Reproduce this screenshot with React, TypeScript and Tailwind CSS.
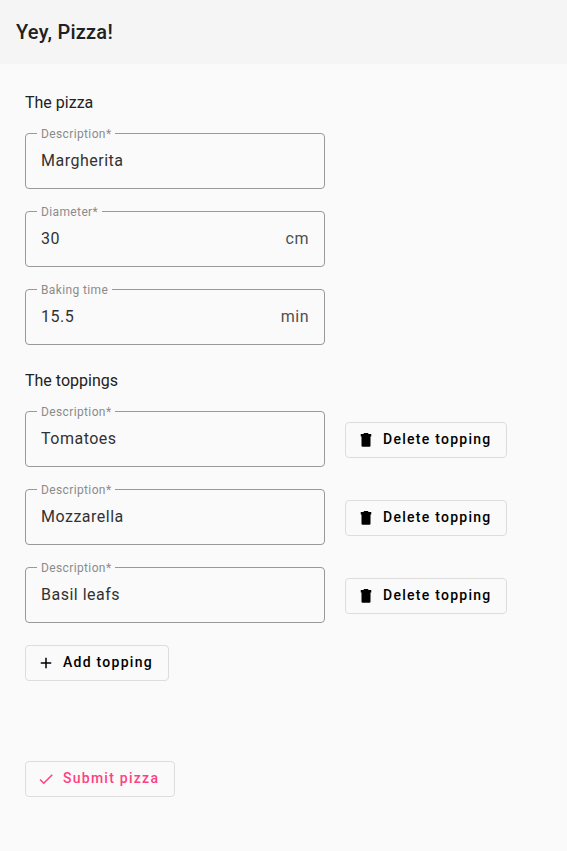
import { useState } from 'react';

const icons = {
  trash: 'M6 7h12v12.500q0 1.500-1.500 1.500h-9q-1.500 0-1.500-1.500zM5 4h3.500l1-1.300h5l1 1.300h3.500v3.200h-14z',
  plus: 'M19 13h-6v6h-2v-6H5v-2h6V5h2v6h6v2z',
  check: 'M9 16.17L4.83 12l-1.42 1.41L9 19 21 7l-1.41-1.41z',
};

type FieldProps = {
  id: string;
  label: string;
  value: string;
  suffix?: string;
  required?: boolean;
  onChange: (value: string) => void;
};

function Field({ id, label, value, suffix, required, onChange }: FieldProps) {
  return (
    <fieldset className="w-full max-w-[300px] min-w-0 rounded border border-[#999999] pb-2">
      <legend className="ml-[11px] px-1 text-xs leading-[13px] tracking-[0.03125em] text-[#8b8b8b]">
        <label htmlFor={id} className="block pt-0.5">
          {label}
          {required && '*'}
        </label>
      </legend>
      <div className="flex items-center px-[15px] tracking-[0.03125em]">
        <input
          id={id}
          value={value}
          required={required}
          onChange={(event) => onChange(event.target.value)}
          className="h-[39px] min-w-0 flex-1 bg-transparent tracking-[0.03125em] text-[#323232] outline-none"
        />
        {suffix && <span className="text-[#4f4f4f]">{suffix}</span>}
      </div>
    </fieldset>
  );
}

type ActionProps = {
  icon: keyof typeof icons;
  label: string;
  accent?: boolean;
  submit?: boolean;
  onClick?: () => void;
};

function Action({ icon, label, accent, submit, onClick }: ActionProps) {
  return (
    <button
      type={submit ? 'submit' : 'button'}
      onClick={onClick}
      className={`flex h-9 shrink-0 items-center gap-2 rounded border border-[#dddddd] pr-[15px] pl-[11px] text-sm font-medium tracking-[0.09em] ${
        accent ? 'text-[#ff4081]' : 'text-black'
      }`}
    >
      <svg viewBox="0 0 24 24" className="size-[18px] fill-current" aria-hidden="true">
        <path d={icons[icon]} />
      </svg>
      <span className="pb-0.5">{label}</span>
    </button>
  );
}

export default function App() {
  const [description, setDescription] = useState('Margherita');
  const [diameter, setDiameter] = useState('30');
  const [bakingTime, setBakingTime] = useState('15.5');
  const [toppings, setToppings] = useState(['Tomatoes', 'Mozzarella', 'Basil leafs']);

  return (
    <div className="min-h-screen bg-[#fafafa] font-['Roboto',sans-serif] text-base text-[#212121]">
      <header className="flex h-16 items-center bg-[#f5f5f5] px-4">
        <h1 className="text-xl font-medium tracking-[0.0125em]">Yey, Pizza!</h1>
      </header>
      <form className="px-[25px] py-[27px]" onSubmit={(event) => event.preventDefault()}>
        <h2>The pizza</h2>
        <div className="mt-[11px] flex flex-col gap-[15px]">
          <Field id="pizza" label="Description" required value={description} onChange={setDescription} />
          <Field id="diameter" label="Diameter" required suffix="cm" value={diameter} onChange={setDiameter} />
          <Field id="baking" label="Baking time" suffix="min" value={bakingTime} onChange={setBakingTime} />
        </div>

        <h2 className="mt-6">The toppings</h2>
        <div className="mt-[11px] flex flex-col gap-[15px]">
          {toppings.map((topping, index) => (
            <div key={index} className="flex items-end gap-5">
              <Field
                id={`topping-${index}`}
                label="Description"
                required
                value={topping}
                onChange={(value) => setToppings(toppings.map((item, i) => (i === index ? value : item)))}
              />
              <div className="pb-[9px]">
                <Action
                  icon="trash"
                  label="Delete topping"
                  onClick={() => setToppings(toppings.filter((_, i) => i !== index))}
                />
              </div>
            </div>
          ))}
        </div>

        <div className="mt-[22px] flex flex-col items-start gap-20">
          <Action icon="plus" label="Add topping" onClick={() => setToppings([...toppings, ''])} />
          <Action icon="check" label="Submit pizza" accent submit />
        </div>
      </form>
    </div>
  );
}
